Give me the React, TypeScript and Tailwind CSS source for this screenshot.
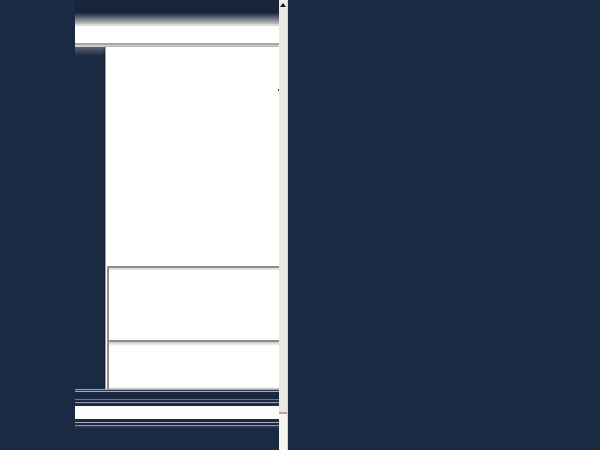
import React from 'react';

// A blurred, half-drawn window: a narrow content column with a scrollbar on a navy desktop.
const Scrollbar: React.FC = () => (
  <div className="w-[9px] h-full flex flex-col bg-[#ecebe6] border-r border-[#d6d5cf]">
    <div className="h-[9px] flex items-center justify-center">
      <svg width="6" height="4" viewBox="0 0 6 4">
        <path d="M3 0 L6 4 L0 4 Z" fill="#1a1a1a" />
      </svg>
    </div>
    <div className="h-[403px] bg-[#eae9e3]" />
    <div className="h-[2px] bg-[#a9a8a2]" />
    <div className="flex-1 bg-[#f6f5f1]" />
  </div>
);

const Stripes: React.FC = () => (
  <div className="flex flex-col">
    <div className="h-[1px] bg-[#9aa3b0]" />
    <div className="h-[1px] bg-[#2a3850]" />
    <div className="h-[1px] bg-[#a3abb7]" />
    <div className="h-[7px] bg-[#1a2740]" />
    <div className="h-[1px] bg-[#6c7789]" />
    <div className="h-[2px] bg-[#1c2a42]" />
    <div className="h-[1px] bg-[#8e97a5]" />
    <div className="h-[1px] bg-[#2b3a52]" />
    <div className="h-[2px] bg-[#1b2841]" />
    <div className="h-[13px] bg-[#fdfdfb]" />
    <div className="h-[3px] bg-[#1b2841]" />
    <div className="h-[1px] bg-[#a5adb9]" />
    <div className="h-[2px] bg-[#1c2a42]" />
    <div className="h-[1px] bg-[#8d96a4]" />
    <div className="h-[2px] bg-gradient-to-b from-[#3b4860] to-[#1b2a43]" />
  </div>
);

const Panel: React.FC = () => (
  <div className="flex-1 flex flex-col bg-white border-l border-[#a4a39d] shadow-[-1px_0_2px_rgba(0,0,0,0.35)]">
    <div className="h-[219px] bg-white flex justify-end items-start">
      <div className="w-[1px] h-[2px] bg-[#444] mt-[42px]" />
    </div>
    <div className="ml-[1px] h-[74px] flex flex-col border-l-2 border-[#908f89] shadow-[inset_1px_1px_2px_rgba(0,0,0,0.2)]">
      <div className="h-[2px] bg-[#8e8d88]" />
      <div className="h-[2px] bg-[#e2e1dc]" />
      <div className="flex-1 bg-white" />
    </div>
    <div className="ml-[1px] flex-1 flex flex-col border-l-2 border-[#908f89]">
      <div className="h-[2px] bg-[#8e8d88]" />
      <div className="h-[4px] bg-gradient-to-b from-[#c9c8c2] to-white" />
      <div className="flex-1 bg-white" />
      <div className="h-[2px] bg-gradient-to-b from-white to-[#c6c5bf]" />
    </div>
  </div>
);

export default function App() {
  return (
    <div className="w-[600px] h-[450px] flex bg-[#1b2a43] overflow-hidden">
      <div className="w-[75px]" />
      <div className="w-[204px] flex flex-col">
        <div className="h-[13px] bg-[#18243a]" />
        <div className="h-[11px] bg-gradient-to-b from-[#1b2a40] via-[#6d7482] to-[#c4c4c2]" />
        <div className="h-[2px] bg-[#d9d9d6]" />
        <div className="h-[17px] bg-white" />
        <div className="h-[2px] bg-[#a6a6a2]" />
        <div className="h-[2px] bg-[#cfcfcb]" />
        <div className="h-[342px] flex">
          <div className="w-[30px] flex flex-col">
            <div className="h-[9px] bg-gradient-to-b from-[#5e6572] to-[#1b2a43]" />
            <div className="flex-1 bg-[#1b2a43]" />
          </div>
          <Panel />
        </div>
        <Stripes />
      </div>
      <Scrollbar />
      <div className="flex-1" />
    </div>
  );
}
